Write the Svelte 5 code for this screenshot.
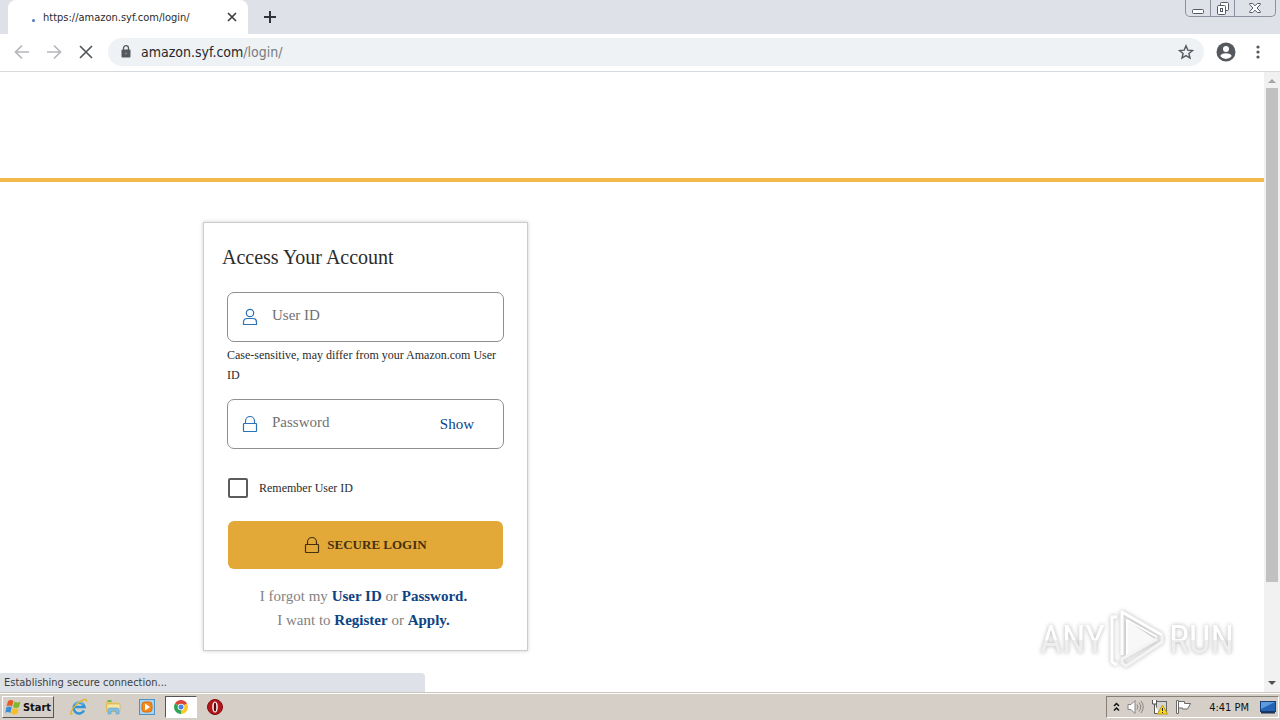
<script lang="ts">
  let userId = $state('');
  let password = $state('');
  let remember = $state(false);
  let showPassword = $state(false);
  let address = $state('amazon.syf.com/login/');

  let host = $derived(address.split('/')[0]);
  let path = $derived(address.slice(host.length));
</script>

{#snippet lock()}
  <svg class="lock" viewBox="0 0 16 18" fill="none" stroke="currentColor" stroke-width="1.2" aria-hidden="true">
    <rect x="1.5" y="8.5" width="13" height="8" rx="0.5" />
    <path d="M3.5 8.5V6a4.5 4.5 0 0 1 9 0v2.5" />
  </svg>
{/snippet}

<div class="window">
  <header class="tabs">
    <div class="tab">
      <span class="spinner"></span>
      <span class="tab-title">https://amazon.syf.com/login/</span>
      <button class="icon-btn" aria-label="Close tab">
        <svg width="10" height="10" viewBox="0 0 10 10" stroke="#3c4043" stroke-width="1.7"><path d="M1 1l8 8M9 1L1 9" /></svg>
      </button>
    </div>
    <button class="icon-btn new-tab" aria-label="New tab">
      <svg width="12" height="12" viewBox="0 0 12 12" stroke="#303338" stroke-width="2"><path d="M6 0v12M0 6h12" /></svg>
    </button>
    <div class="controls">
      <button aria-label="Minimize">
        <svg width="12" height="13" viewBox="0 0 12 13" fill="#fff" stroke="#555b66"><rect x="0.5" y="7.5" width="11" height="4" rx="1" /></svg>
      </button>
      <button aria-label="Restore">
        <svg width="14" height="13" viewBox="0 0 14 13" fill="#fff" stroke="#555b66">
          <rect x="4.5" y="0.5" width="8" height="8" rx="1" />
          <rect x="1.5" y="3.5" width="8" height="9" rx="1" />
          <rect x="4.5" y="6.5" width="2" height="3" />
        </svg>
      </button>
      <button class="wide" aria-label="Close">
        <svg width="12" height="12" viewBox="0 0 12 12" fill="#fff" stroke="#555b66">
          <path d="M0.7 1.5h3L6 3.8l2.3-2.3h3v1L8 6l3.3 3.5v1h-3L6 8.2l-2.3 2.3h-3v-1L4 6 0.7 2.5z" />
        </svg>
      </button>
    </div>
  </header>

  <nav class="toolbar">
    <button class="icon-btn tool" aria-label="Back">
      <svg width="16" height="16" viewBox="0 0 16 16" fill="none" stroke="#b5b7ba" stroke-width="1.7"><path d="M15 8H2M8 1.5L1.5 8 8 14.5" /></svg>
    </button>
    <button class="icon-btn tool" aria-label="Forward">
      <svg width="16" height="16" viewBox="0 0 16 16" fill="none" stroke="#b5b7ba" stroke-width="1.7"><path d="M1 8h13M8 1.5L14.5 8 8 14.5" /></svg>
    </button>
    <button class="icon-btn tool" aria-label="Stop">
      <svg width="16" height="16" viewBox="0 0 16 16" stroke="#55585c" stroke-width="1.7"><path d="M2 2l12 12M14 2L2 14" /></svg>
    </button>
    <div class="omnibox">
      <svg width="10" height="13" viewBox="0 0 10 13" fill="#55585c">
        <rect x="0.5" y="4.5" width="9" height="8" rx="1" />
        <path d="M2.5 5V3.2a2.5 2.5 0 0 1 5 0V5" fill="none" stroke="#55585c" stroke-width="1.3" />
        <circle cx="5" cy="8.5" r="1" fill="#888b8f" />
      </svg>
      <a class="address" href="#login"><span class="host">{host}</span>{path}</a>
      <button class="icon-btn" aria-label="Bookmark this page">
        <svg width="16" height="16" viewBox="0 0 16 16" fill="none" stroke="#55585c" stroke-width="1.4">
          <path d="M8 1.8l1.8 4.3 4.7.4-3.6 3 1.1 4.6L8 11.6l-4 2.5 1.1-4.6-3.6-3 4.7-.4z" />
        </svg>
      </button>
    </div>
    <button class="icon-btn" aria-label="Profile">
      <svg width="20" height="20" viewBox="0 0 20 20">
        <circle cx="10" cy="10" r="9.5" fill="#55585d" />
        <circle cx="10" cy="7" r="3" fill="#fff" />
        <path d="M4.2 14c1-2 3.5-2.7 5.8-2.7s4.8.7 5.8 2.7A7.2 7.2 0 0 1 10 17a7.2 7.2 0 0 1-5.8-3z" fill="#fff" />
      </svg>
    </button>
    <button class="icon-btn menu" aria-label="Menu">
      <svg width="4" height="14" viewBox="0 0 4 14" fill="#55585d">
        <circle cx="2" cy="2" r="1.6" /><circle cx="2" cy="7" r="1.6" /><circle cx="2" cy="12" r="1.6" />
      </svg>
    </button>
  </nav>

  <div class="viewport">
    <main class="page">
      <div class="brand-bar"></div>
      <form class="card" id="login" onsubmit={(e) => e.preventDefault()}>
        <h1>Access Your Account</h1>
        <div class="fields">
          <div class="field">
            <svg class="user" viewBox="0 0 16 18" fill="none" stroke="currentColor" stroke-width="1.2" aria-hidden="true">
              <circle cx="8" cy="5" r="3.7" />
              <path d="M1.5 16.5v-2.3q0-3.7 4-3.7h5q4 0 4 3.7v2.3z" />
            </svg>
            <input type="text" placeholder="User ID" aria-label="User ID" aria-describedby="hint" bind:value={userId} />
          </div>
          <p class="hint" id="hint">Case-sensitive, may differ from your Amazon.com User ID</p>
          <div class="field">
            {@render lock()}
            <input type={showPassword ? 'text' : 'password'} placeholder="Password" aria-label="Password" bind:value={password} />
            <button type="button" class="show" onclick={() => (showPassword = !showPassword)}>
              {showPassword ? 'Hide' : 'Show'}
            </button>
          </div>
          <label class="remember">
            <input type="checkbox" bind:checked={remember} />
            Remember User ID
          </label>
          <button type="submit" class="submit">
            {@render lock()}
            SECURE LOGIN
          </button>
          <p class="help">
            I forgot my <a href="#user-id">User ID</a> or <a href="#password">Password.</a><br />
            I want to <a href="#register">Register</a> or <a href="#apply">Apply.</a>
          </p>
        </div>
      </form>
    </main>

    <div class="scrollbar">
      <svg class="arrow" viewBox="0 0 16 16"><path d="M4 11l4-4 4 4z" fill="#a3a3a3" /></svg>
      <div class="track"><div class="thumb"></div></div>
      <svg class="arrow" viewBox="0 0 16 16"><path d="M4 5l4 4 4-4z" fill="#505050" /></svg>
    </div>

    <div class="status">Establishing secure connection...</div>

    <div class="watermark">
      <span>ANY</span>
      <svg width="58" height="64" viewBox="0 0 58 64" fill="none" stroke="#fff" stroke-width="3" stroke-linejoin="round">
        <path d="M9 9H4v45l5 3" />
        <path d="M20 13v34l27-16z" fill="#f8f8f8" stroke="none" />
        <path d="M14 47V4l40 23" />
        <path d="M19 47V12l30 17" stroke-width="2" />
        <path d="M54 27v7L18 58l-4-3v-4l35-20" stroke="#f4f4f4" />
      </svg>
      <span>RUN</span>
    </div>
  </div>

  <footer class="taskbar">
    <button class="start">
      <svg width="17" height="16" viewBox="0 0 17 16">
        <path d="M3 2q3-2 5.5 0L7 7.5q-3-1.8-5.5 0z" fill="#e85a24" />
        <path d="M9.5 2.5q3 1.8 6 0L14 8q-3 1.8-6 0z" fill="#7fb72e" />
        <path d="M1.3 8.5q3-2 5.5 0L5.3 14q-3-1.8-5 0z" fill="#3b8dd9" />
        <path d="M7.7 9q3 1.8 6 0l-1.5 5.5q-3 1.8-6 0z" fill="#f8bd22" />
      </svg>
      Start
    </button>
    <div class="apps">
      <button class="app" aria-label="Internet Explorer">
        <svg width="18" height="18" viewBox="0 0 18 18" fill="none">
          <path d="M14 12.5a5.5 5.5 0 1 1 .5-3.5H4.500" stroke="#2f94d8" stroke-width="2.5" />
          <path d="M5 6.5a4.5 4.5 0 0 1 8 0" stroke="#8fd3f5" stroke-width="1" />
          <path d="M2.5 15.5C-1 18 1 11 7 6c5-4.5 10-6 9.5-2.5" stroke="#e6b32d" stroke-width="1.4" />
        </svg>
      </button>
      <button class="app" aria-label="File Explorer">
        <svg width="18" height="18" viewBox="0 0 18 18">
          <path d="M2 3h5l1 1.5h7V14H2z" fill="#e7c768" />
          <path d="M3.5 2h4v2h-4z" fill="#71b957" />
          <path d="M3 6h13v7H3z" fill="#f7e7a2" stroke="#d2ad48" stroke-width=".6" />
          <path d="M4 16v-4q0-2 2-2h7q2 0 2 2v4h-3v-3H7v3z" fill="#83bfe3" stroke="#5b9fc8" stroke-width=".6" />
        </svg>
      </button>
      <button class="app" aria-label="Media Player">
        <svg width="18" height="18" viewBox="0 0 18 18">
          <rect x="1.5" y="1.5" width="15" height="15" fill="#a9d2ef" stroke="#4d94c6" />
          <rect x="4" y="4" width="10" height="10" rx="3" fill="#f28a1b" stroke="#d96d0e" />
          <path d="M7 5.5l5 3.5-5 3.5z" fill="#fff" />
        </svg>
      </button>
      <button class="app active" aria-label="Chrome">
        <svg width="14" height="14" viewBox="0 0 14 14">
          <path d="M7 7L.94 3.5A7 7 0 0 1 13.06 3.5z" fill="#dc4437" />
          <path d="M7 7l6.06-3.5A7 7 0 0 1 7 14z" fill="#fbc92e" />
          <path d="M7 7v7A7 7 0 0 1 .94 3.5z" fill="#30a253" />
          <circle cx="7" cy="7" r="3.3" fill="#fff" />
          <circle cx="7" cy="7" r="2.5" fill="#4684e8" />
        </svg>
      </button>
      <button class="app" aria-label="Opera">
        <svg width="16" height="16" viewBox="0 0 16 16">
          <circle cx="8" cy="8" r="7.5" fill="#b3151b" stroke="#7c0d10" />
          <ellipse cx="8" cy="8" rx="2.8" ry="5.5" fill="#fff" />
          <ellipse cx="8" cy="8" rx="1.3" ry="4.5" fill="#5e0b0d" />
        </svg>
      </button>
    </div>
    <div class="tray">
      <svg width="7" height="10" viewBox="0 0 7 10" fill="none" stroke="#111" stroke-width="1.5"><path d="M1 4l2.5-2.5L6 4M1 8.5L3.5 6 6 8.5" /></svg>
      <svg width="17" height="16" viewBox="0 0 17 16" fill="none" stroke="#858585">
        <path d="M1 5.5h3l4-4v13l-4-4H1z" fill="#fff" />
        <path d="M10 5.5q2 2.5 0 5M12 3.5q3.5 4.5 0 9M14 2q4.5 6 0 12" />
      </svg>
      <svg width="17" height="16" viewBox="0 0 17 16">
        <rect x="5.5" y="2.5" width="10" height="10" fill="#d5d5d5" stroke="#666" />
        <path d="M1.5 1v4h4V1M3.5 5v9.5h5" fill="#fff" stroke="#555" />
        <path d="M11.5 6l5 9h-10z" fill="#fbd821" stroke="#c09a0b" />
        <path d="M11.5 9v3M11.5 13v1" stroke="#222" />
      </svg>
      <svg width="17" height="16" viewBox="0 0 17 16" fill="#fff" stroke="#6a6a6a">
        <path d="M1.5 1.5h2v13h-2z" />
        <path d="M3.5 2.500h6v2h6l-3 5.5h-5V9h-4z" />
      </svg>
      <time>4:41 PM</time>
      <svg width="16" height="14" viewBox="0 0 16 14">
        <rect x="0.5" y="1.5" width="15" height="10" fill="#2463b5" stroke="#173f79" />
        <path d="M1 2h14L1 9z" fill="#5c9be0" />
        <path d="M1 11.5h14v2H1z" fill="#1b3355" />
      </svg>
    </div>
  </footer>
</div>

<style>
  :global(body) {
    margin: 0;
  }

  .window {
    --ui: "DejaVu Sans Condensed", Tahoma, "Noto Sans", sans-serif;
    display: flex;
    flex-direction: column;
    height: 100vh;
    overflow: hidden;
    background: #fff;
    font-family: "Liberation Serif", "Times New Roman", serif;
    color: #2b2b2b;
  }

  button {
    margin: 0;
    padding: 0;
    border: 0;
    background: none;
    font-family: inherit;
    color: inherit;
    cursor: pointer;
  }

  .icon-btn {
    display: flex;
    align-items: center;
    justify-content: center;
    flex: none;
  }

  .tabs {
    display: flex;
    flex: none;
    height: 34px;
    padding-left: 8px;
    background: #dee1e8;
  }

  .tab {
    display: flex;
    align-items: center;
    box-sizing: border-box;
    width: 240px;
    padding: 0 11px 0 24px;
    border-radius: 8px 8px 0 0;
    background: #fff;
  }

  .spinner {
    width: 3px;
    height: 3px;
    margin-top: 6px;
    border-radius: 50%;
    background: #5477c4;
  }

  .tab-title {
    flex: 1;
    margin-left: 8px;
    font-family: var(--ui);
    font-size: 11px;
    white-space: nowrap;
  }

  .new-tab {
    width: 44px;
  }

  .controls {
    display: flex;
    height: 16px;
    margin: 0 4px 0 auto;
    border: 1px solid #8b919e;
    border-top: 0;
    border-radius: 0 0 5px 5px;
  }

  .controls button {
    display: flex;
    align-items: center;
    justify-content: center;
    width: 24px;
  }

  .controls button + button {
    border-left: 1px solid #8b919e;
  }

  .controls .wide {
    width: 41px;
  }

  .toolbar {
    display: flex;
    align-items: center;
    flex: none;
    height: 35px;
    padding: 0 16px 2px 6px;
    border-bottom: 1px solid #d8dadc;
  }

  .tool {
    width: 32px;
  }

  .omnibox {
    display: flex;
    align-items: center;
    flex: 1;
    height: 28px;
    margin: 0 12px 0 6px;
    padding: 0 10px 0 13px;
    border-radius: 14px;
    background: #eff2f5;
  }

  .address {
    flex: 1;
    margin-left: 10px;
    font-family: var(--ui);
    font-size: 14px;
    color: #777b80;
    text-decoration: none;
  }

  .host {
    color: #26282b;
  }

  .menu {
    width: 24px;
    margin-left: 10px;
    margin-right: -6px;
  }

  .viewport {
    position: relative;
    display: flex;
    flex: 1;
    min-height: 0;
  }

  .page {
    flex: 1;
    overflow: hidden;
  }

  .brand-bar {
    height: 106px;
    border-bottom: 4px solid #f4b94a;
  }

  .card {
    box-sizing: border-box;
    width: 325px;
    margin: 40px 0 0 203px;
    padding: 22px 23px 18px;
    border: 1px solid #ccc;
    box-shadow: 0 0 4px rgba(0, 0, 0, 0.2);
  }

  h1 {
    margin: 0 0 23px -5px;
    font-size: 20px;
    line-height: 24px;
    font-weight: 400;
  }

  .field {
    display: flex;
    align-items: center;
    box-sizing: border-box;
    height: 50px;
    padding: 0 29px 0 14px;
    border: 1px solid #8f8f8f;
    border-radius: 7px;
    color: #2a72b5;
  }

  .field svg {
    flex: none;
    width: 16px;
    height: 18px;
  }

  .field input {
    flex: 1;
    min-width: 0;
    height: 44px;
    margin-left: 14px;
    padding: 0 0 4px;
    border: 0;
    outline: 0;
    background: none;
    font-family: inherit;
    font-size: 15px;
    color: #2b2b2b;
  }

  .field input::placeholder {
    color: #717171;
    opacity: 1;
  }

  .show {
    font-size: 15px;
    color: #0c4383;
  }

  .hint {
    margin: 3px 0 14px;
    font-size: 12px;
    line-height: 20px;
  }

  .remember {
    display: flex;
    align-items: center;
    gap: 11px;
    margin: 29px 1px 23px;
    font-size: 12px;
    line-height: 20px;
  }

  .remember input {
    appearance: none;
    width: 20px;
    height: 20px;
    margin: 0;
    border: 2px solid #5c5c5c;
    border-radius: 2px;
  }

  .remember input:checked {
    background: #0c4383;
  }

  .submit {
    display: flex;
    align-items: center;
    justify-content: center;
    gap: 7px;
    width: calc(100% - 2px);
    height: 48px;
    margin: 0 1px;
    border-radius: 6px;
    background: #e2a838;
    font-size: 13px;
    font-weight: 700;
    color: #45310f;
  }

  .submit .lock {
    width: 16px;
    height: 18px;
  }

  .help {
    margin: 15px 0 0;
    padding-right: 4px;
    font-size: 15px;
    line-height: 24px;
    text-align: center;
    color: #828282;
  }

  .help a {
    font-weight: 700;
    color: #0c4383;
    text-decoration: none;
  }

  .scrollbar {
    display: flex;
    flex-direction: column;
    flex: none;
    width: 16px;
    background: #f1f1f1;
  }

  .arrow {
    flex: none;
    width: 16px;
    height: 16px;
  }

  .track {
    flex: 1;
    padding: 0 2px;
  }

  .thumb {
    height: 84%;
    background: #c1c1c1;
  }

  .status {
    position: absolute;
    left: 0;
    bottom: 0;
    box-sizing: border-box;
    width: 425px;
    height: 19px;
    padding-left: 4px;
    border-radius: 0 4px 0 0;
    background: #dee1e8;
    font-family: var(--ui);
    font-size: 11px;
    line-height: 20px;
    color: #3c4043;
  }

  .watermark {
    position: absolute;
    right: 46px;
    bottom: 20px;
    display: flex;
    align-items: center;
    gap: 3px;
    font-family: "Roboto Condensed", "Liberation Sans Narrow", sans-serif;
    font-size: 38px;
    line-height: 64px;
    filter: drop-shadow(0 0 2px rgba(0, 0, 0, 0.3));
    pointer-events: none;
  }

  .watermark span {
    background: linear-gradient(#fff 50%, #eee 50%);
    background-clip: text;
    color: transparent;
  }

  .taskbar {
    display: flex;
    align-items: center;
    flex: none;
    box-sizing: border-box;
    height: 28px;
    padding: 1px 0 0 2px;
    border-top: 1px solid #c9c5be;
    box-shadow: inset 0 1px #fff;
    background: #d5cfc7;
    font-family: var(--ui);
    font-size: 11px;
    color: #111;
  }

  .start {
    display: flex;
    align-items: center;
    justify-content: center;
    gap: 1px;
    box-sizing: border-box;
    width: 52px;
    height: 22px;
    border: 1px solid;
    border-color: #fff #555 #555 #fff;
    font-size: 11px;
    font-weight: 700;
  }

  .apps {
    display: flex;
    gap: 2px;
    margin-left: 9px;
  }

  .app {
    display: flex;
    align-items: center;
    justify-content: center;
    box-sizing: border-box;
    width: 32px;
    height: 22px;
  }

  .app.active {
    border: 1px solid;
    border-color: #555 #fff #fff #555;
    background: #fff;
  }

  .tray {
    display: flex;
    align-items: center;
    gap: 7px;
    box-sizing: border-box;
    height: 22px;
    margin: 0 1px 0 auto;
    padding: 0 2px 0 6px;
    border: 1px solid;
    border-color: #858078 #fff #fff #858078;
  }

  .tray time {
    margin: 0 4px 0 10px;
  }
</style>
